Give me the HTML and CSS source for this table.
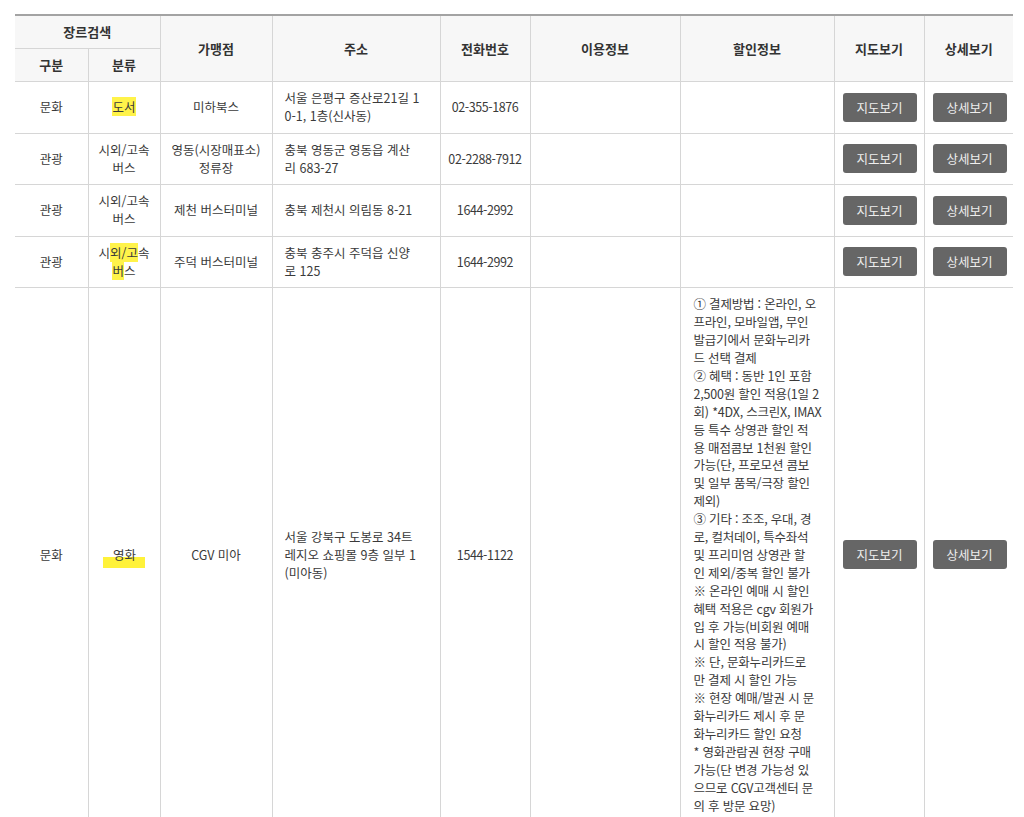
FILE: index.html
```html
<!DOCTYPE html>
<html lang="ko">
<head>
<meta charset="utf-8">
<title>문화누리카드 가맹점 검색</title>
<link rel="stylesheet" href="styles.css">
</head>
<body>
<div class="wrap">
<table class="list">
  <colgroup>
    <col class="c-gubun">
    <col class="c-type">
    <col class="c-store">
    <col class="c-addr">
    <col class="c-tel">
    <col class="c-use">
    <col class="c-sale">
    <col class="c-map">
    <col class="c-detail">
  </colgroup>
  <thead>
    <tr class="h1">
      <th colspan="2">장르검색</th>
      <th rowspan="2">가맹점</th>
      <th rowspan="2">주소</th>
      <th rowspan="2">전화번호</th>
      <th rowspan="2">이용정보</th>
      <th rowspan="2">할인정보</th>
      <th rowspan="2">지도보기</th>
      <th rowspan="2">상세보기</th>
    </tr>
    <tr class="h2">
      <th>구분</th>
      <th>분류</th>
    </tr>
  </thead>
  <tbody>
    <tr class="row">
      <td>문화</td>
      <td><span class="mark">도서</span></td>
      <td>미하북스</td>
      <td class="left">서울 은평구 증산로21길 1<br>0-1, 1층(신사동)</td>
      <td class="tel">02-355-1876</td>
      <td></td>
      <td></td>
      <td><button class="btn" type="button">지도보기</button></td>
      <td><button class="btn" type="button">상세보기</button></td>
    </tr>
    <tr class="row">
      <td>관광</td>
      <td>시외/고속<br>버스</td>
      <td>영동(시장매표소)<br>정류장</td>
      <td class="left">충북 영동군 영동읍 계산<br>리 683-27</td>
      <td class="tel">02-2288-7912</td>
      <td></td>
      <td></td>
      <td><button class="btn" type="button">지도보기</button></td>
      <td><button class="btn" type="button">상세보기</button></td>
    </tr>
    <tr class="row">
      <td>관광</td>
      <td>시외/고속<br>버스</td>
      <td>제천 버스터미널</td>
      <td class="left">충북 제천시 의림동 8-21</td>
      <td class="tel">1644-2992</td>
      <td></td>
      <td></td>
      <td><button class="btn" type="button">지도보기</button></td>
      <td><button class="btn" type="button">상세보기</button></td>
    </tr>
    <tr class="row">
      <td>관광</td>
      <td>시<span class="mark">외/고</span>속<br><span class="mark">버</span>스</td>
      <td>주덕 버스터미널</td>
      <td class="left">충북 충주시 주덕읍 신양<br>로 125</td>
      <td class="tel">1644-2992</td>
      <td></td>
      <td></td>
      <td><button class="btn" type="button">지도보기</button></td>
      <td><button class="btn" type="button">상세보기</button></td>
    </tr>
    <tr class="row">
      <td>문화</td>
      <td><span class="marker">영화</span></td>
      <td>CGV 미아</td>
      <td class="left">서울 강북구 도봉로 34트<br>레지오 쇼핑몰 9층 일부 1<br>(미아동)</td>
      <td class="tel">1544-1122</td>
      <td></td>
      <td class="left sale">① 결제방법 : 온라인, 오<br>프라인, 모바일앱, 무인<br>발급기에서 문화누리카<br>드 선택 결제<br>② 혜택 : 동반 1인 포함<br>2,500원 할인 적용(1일 2<br>회) *4DX, 스크린X, IMAX<br>등 특수 상영관 할인 적<br>용 매점콤보 1천원 할인<br>가능(단, 프로모션 콤보<br>및 일부 품목/극장 할인<br>제외)<br>③ 기타 : 조조, 우대, 경<br>로, 컬처데이, 특수좌석<br>및 프리미엄 상영관 할<br>인 제외/중복 할인 불가<br>※ 온라인 예매 시 할인<br>혜택 적용은 cgv 회원가<br>입 후 가능(비회원 예매<br>시 할인 적용 불가)<br>※ 단, 문화누리카드로<br>만 결제 시 할인 가능<br>※ 현장 예매/발권 시 문<br>화누리카드 제시 후 문<br>화누리카드 할인 요청<br>* 영화관람권 현장 구매<br>가능(단 변경 가능성 있<br>으므로 CGV고객센터 문<br>의 후 방문 요망)</td>
      <td><button class="btn" type="button">지도보기</button></td>
      <td><button class="btn" type="button">상세보기</button></td>
    </tr>
  </tbody>
</table>
</div>
</body>
</html>
```

FILE: styles.css
```css
html, body {
  margin: 0;
  padding: 0;
  background: #ffffff;
}

body {
  font-family: "Noto Sans CJK KR", "Noto Sans", sans-serif;
  color: #333333;
  font-size: 12.5px;
}

.wrap {
  padding: 14px 11px 0 15px;
}

.list {
  width: 998px;
  table-layout: fixed;
  border-collapse: collapse;
  border-top: 2px solid #a3a3a3;
}

.c-gubun { width: 73px; }
.c-type { width: 72px; }
.c-store { width: 112px; }
.c-addr { width: 168px; }
.c-tel { width: 90px; }
.c-use { width: 150px; }
.c-sale { width: 154px; }
.c-map { width: 90px; }
.c-detail { width: 89px; }

.list th,
.list td {
  border: 1px solid #d6d6d6;
  text-align: center;
  vertical-align: middle;
  line-height: 18px;
}

.list tr > :first-child { border-left: 0; }
.list tr > :last-child { border-right: 0; }
.list .h2 > :first-child { border-left: 0; }
.list .h2 > :last-child { border-right: 1px solid #d6d6d6; }

.list th {
  background: #f7f7f7;
  font-weight: 700;
  font-size: 13px;
  color: #333333;
  padding: 7px 6px;
}

.list td {
  padding: 7.25px 8px;
  color: #3a3a3a;
}

.list td.tel {
  padding-left: 0;
  padding-right: 0;
  white-space: nowrap;
  letter-spacing: -0.4px;
}

.list td.left {
  text-align: left;
  padding-left: 12px;
  padding-right: 6px;
}

.list td.sale {
  padding-left: 13px;
  white-space: nowrap;
  letter-spacing: -0.2px;
  line-height: 17.9px;
}

.mark {
  background: #fff34a;
}

.marker {
  padding: 0 9px 4px 10px;
  background: linear-gradient(to bottom, transparent 52%, #fff23a 52%);
}

.btn {
  width: 74px;
  height: 29px;
  border: 0;
  border-radius: 3px;
  background: #666666;
  color: #eeeeee;
  font-family: "Noto Sans CJK KR", "Noto Sans", sans-serif;
  font-size: 12.5px;
  padding: 0;
  cursor: pointer;
}
```
